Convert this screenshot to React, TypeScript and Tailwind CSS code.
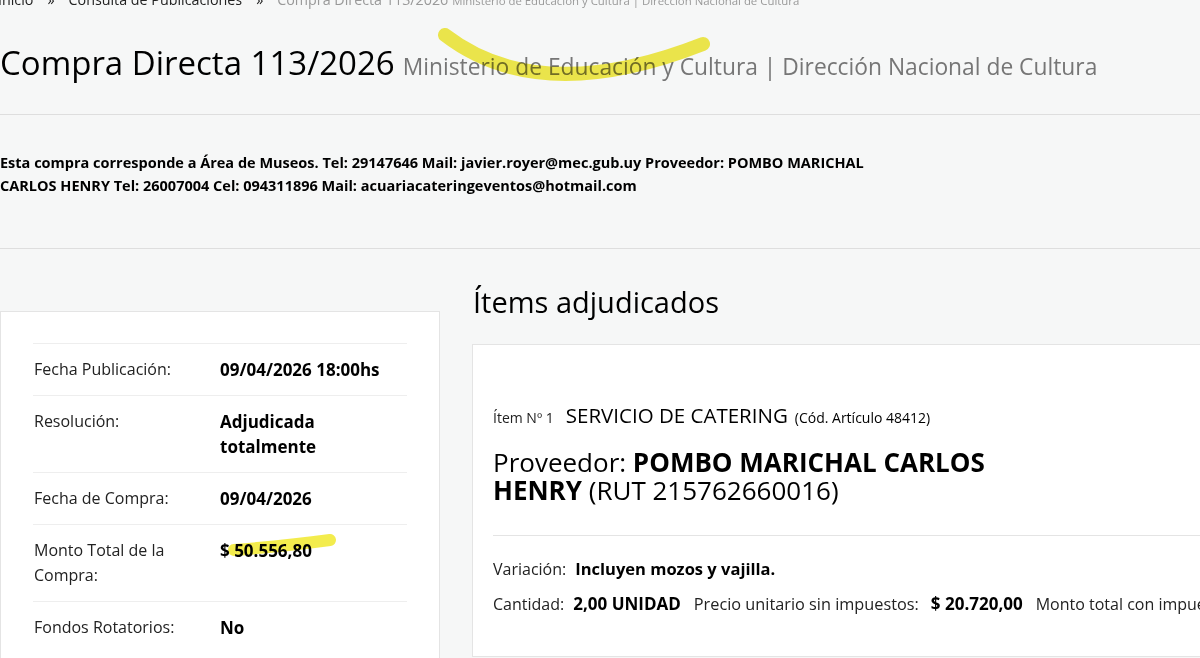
export default function App() {
  const rows: { label: string; value: string }[] = [
    { label: 'Fecha Publicación:', value: '09/04/2026 18:00hs' },
    { label: 'Resolución:', value: 'Adjudicada totalmente' },
    { label: 'Fecha de Compra:', value: '09/04/2026' },
    { label: 'Monto Total de la Compra:', value: '$ 50.556,80' },
    { label: 'Fondos Rotatorios:', value: 'No' },
  ];

  return (
    <div className="relative h-[658px] w-[1200px] overflow-hidden bg-[#f6f7f7] font-['Open_Sans',sans-serif] text-black">
      {/* breadcrumb + title */}
      <div className="border-b border-[#dedede] pb-[25px]">
        <div className="-ml-[2px] -mt-[10px] flex items-baseline whitespace-nowrap text-[14.3px] leading-[20px] text-[#222]">
          <span>Inicio</span>
          <span className="px-[14px]">»</span>
          <span>Consulta de Publicaciones</span>
          <span className="px-[14px]">»</span>
          <span className="text-[#999]">Compra Directa 113/2026</span>
          <span className="ml-[4px] text-[11.4px] text-[#999]">Ministerio de Educación y Cultura | Dirección Nacional de Cultura</span>
        </div>
        <h1 className="mt-[30px] flex items-baseline whitespace-nowrap leading-[44px]">
          <span className="text-[33px] font-medium">Compra Directa 113/2026</span>
          <span className="ml-[8px] text-[22.8px] text-[#767676]">Ministerio de Educación y Cultura | Dirección Nacional de Cultura</span>
        </h1>
      </div>

      {/* info */}
      <div className="border-b border-[#dedede] pb-[51px] pt-[36px]">
        <p className="max-w-[880px] text-[14.5px] font-bold leading-[23px]">
          Esta compra corresponde a Área de Museos. Tel: 29147646 Mail: javier.royer@mec.gub.uy Proveedor: POMBO MARICHAL CARLOS HENRY Tel: 26007004 Cel: 094311896 Mail: acuariacateringeventos@hotmail.com
        </p>
      </div>

      <div className="flex items-start">
        {/* left card */}
        <div className="mt-[62px] w-[440px] shrink-0 border border-[#e4e4e4] bg-white px-[32px] pb-[40px] pt-[31px]">
          {rows.map((r) => (
            <div key={r.label} className="grid grid-cols-[187px_1fr] border-t border-[#eeeeee] py-[13px] leading-[25px]">
              <div className="pl-px text-[16px] text-[#222]">{r.label}</div>
              <div className="text-[17px] font-bold">{r.value}</div>
            </div>
          ))}
        </div>

        {/* right column */}
        <div className="ml-[32px] mt-[35px] w-[800px] shrink-0">
          <h2 className="pl-px text-[29px] leading-[36px]">Ítems adjudicados</h2>
          <div className="mt-[24px] border border-[#e4e4e4] bg-white pb-[40px] pl-[20px] pt-[58px]">
            <div className="flex items-baseline leading-[24px]">
              <span className="text-[14px] text-[#222]">Ítem Nº 1</span>
              <span className="ml-[12px] text-[20.5px]">SERVICIO DE CATERING</span>
              <span className="ml-[7px] text-[14px]">(Cód. Artículo 48412)</span>
            </div>
            <div className="mt-[18px] max-w-[510px] text-[26px] leading-[28px]">
              Proveedor: <span className="font-bold">POMBO MARICHAL CARLOS HENRY</span> (RUT 215762660016)
            </div>
            <div className="mt-[31px] border-t border-[#e4e4e4] pt-[21px] text-[16px] leading-[24px]">
              <div className="flex whitespace-nowrap">
                <span className="text-[#222]">Variación:</span>
                <span className="ml-[9px] text-[16.5px] font-bold">Incluyen mozos y vajilla.</span>
              </div>
              <div className="mt-[11px] flex items-baseline whitespace-nowrap">
                <span className="text-[#222]">Cantidad:</span>
                <span className="ml-[9px] text-[17px] font-bold">2,00 UNIDAD</span>
                <span className="ml-[13px] text-[16.3px] text-[#222]">Precio unitario sin impuestos:</span>
                <span className="ml-[12px] text-[17px] font-bold">$ 20.720,00</span>
                <span className="ml-[13px] text-[#222]">Monto total con impuestos:</span>
              </div>
            </div>
          </div>
        </div>
      </div>

      {/* highlighter marks */}
      <svg className="pointer-events-none absolute left-0 top-0 mix-blend-multiply" width="1200" height="658">
        <path d="M 445 35 Q 540 108 703 44" fill="none" stroke="#f2ea3a" strokeWidth="14" strokeLinecap="round" opacity="0.9" />
        <path d="M 234 550 Q 285 546 330 540" fill="none" stroke="#f2ea3a" strokeWidth="12" strokeLinecap="round" opacity="0.9" />
      </svg>
    </div>
  );
}
